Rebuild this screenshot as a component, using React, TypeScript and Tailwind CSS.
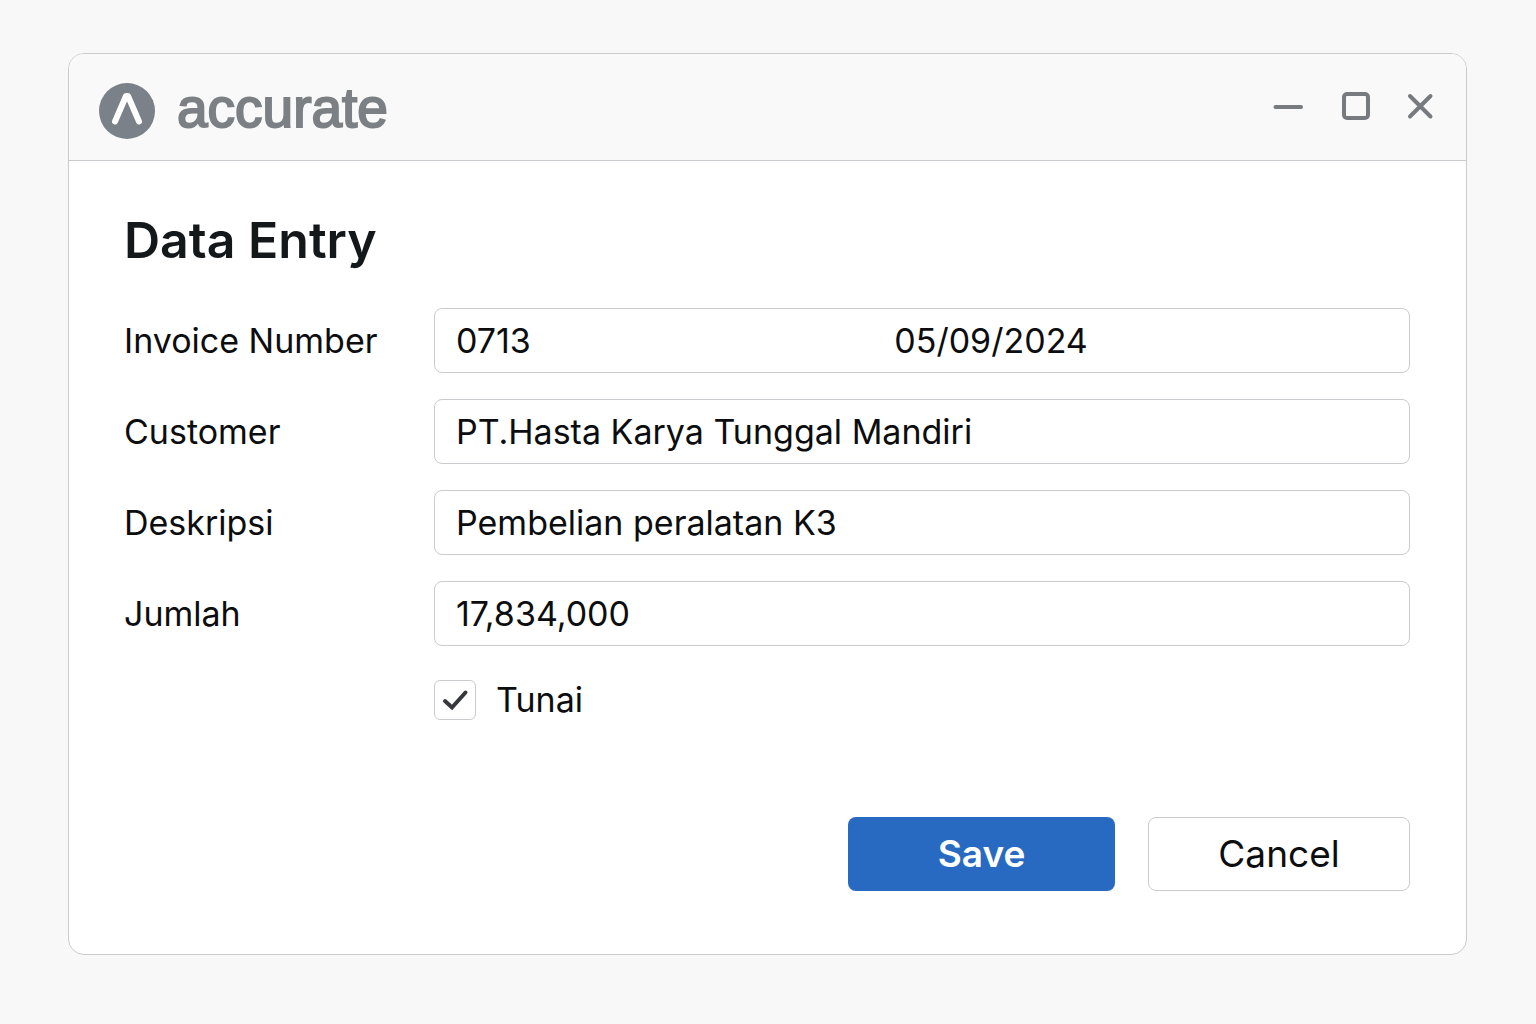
import React from 'react';

const fields = [
  { id: 'customer', label: 'Customer', value: 'PT.Hasta Karya Tunggal Mandiri' },
  { id: 'deskripsi', label: 'Deskripsi', value: 'Pembelian peralatan K3' },
  { id: 'jumlah', label: 'Jumlah', value: '17,834,000' },
];

const box = 'h-[65px] w-full min-w-0 rounded-lg border border-[#c9cbce] bg-white px-[21px] text-[34px] text-[#0c0d0f] outline-none';
const label = 'text-[34px] leading-[44px] text-[#0c0d0f]';

export default function App() {
  return (
    <div className="min-h-screen bg-[#f8f8f8] py-[53px] pr-[69px] pl-[68px] font-['Inter',sans-serif]">
      <main className="overflow-hidden rounded-2xl border border-[#c9cbce] bg-white">
        <header className="flex h-[107px] items-start justify-between border-b border-[#c9cbce] bg-[#f9f9f9] pt-[29px] pr-[30px] pl-[30px]">
          <div className="flex items-start gap-[22px]">
            <svg className="size-14" viewBox="0 0 56 56" fill="none" aria-hidden="true">
              <circle cx="28" cy="28" r="28" fill="#7b8188" />
              <path d="M16 38.500L27 13H29L40 38.500" stroke="#fff" strokeWidth="6" strokeLinecap="round" strokeLinejoin="round" />
            </svg>
            <span className="font-['Liberation_Sans',sans-serif] text-[55px] leading-[50px] text-[#7c8084] [-webkit-text-stroke:2px_#7c8084]">accurate</span>
          </div>
          <div className="flex h-12 items-center gap-[34px] text-[#777b7f]">
            <button type="button" aria-label="Minimize">
              <svg className="size-8" viewBox="0 0 32 32" fill="none" stroke="currentColor" strokeWidth="4" strokeLinecap="round"><path d="M3.500 16H29" /></svg>
            </button>
            <button type="button" aria-label="Maximize">
              <svg className="size-8" viewBox="0 0 32 32" fill="none" stroke="currentColor" strokeWidth="4"><rect x="6" y="3" width="24" height="24" rx="3" /></svg>
            </button>
            <button type="button" aria-label="Close">
              <svg className="size-8" viewBox="0 0 32 32" fill="none" stroke="currentColor" strokeWidth="4" strokeLinecap="round"><path d="M6 5L26.500 25.500M26.500 5L6 25.500" /></svg>
            </button>
          </div>
        </header>
        <form className="pt-[49px] pr-14 pb-[63px] pl-[55px]" onSubmit={(e) => e.preventDefault()}>
          <h1 className="text-[50px] leading-[60px] font-semibold text-[#15181b]">Data Entry</h1>
          <div className="mt-[38px] grid grid-cols-[310px_1fr] items-center gap-y-[26px]">
            <label htmlFor="invoice" className={label}>Invoice Number</label>
            <div className="flex h-[65px] rounded-lg border border-[#c9cbce]">
              <input id="invoice" defaultValue="0713" className="w-[45%] min-w-0 bg-transparent pl-[21px] text-[34px] text-[#0c0d0f] outline-none" />
              <input aria-label="Invoice date" defaultValue="05/09/2024" className="min-w-0 flex-1 bg-transparent pl-[21px] text-[34px] text-[#0c0d0f] outline-none" />
            </div>
            {fields.map((f) => (
              <React.Fragment key={f.id}>
                <label htmlFor={f.id} className={label}>{f.label}</label>
                <input id={f.id} defaultValue={f.value} className={box} />
              </React.Fragment>
            ))}
          </div>
          <label className="mt-8 ml-[310px] flex w-fit items-center gap-5 text-[34px] leading-[44px] text-[#0c0d0f]">
            <span className="relative h-10 w-[42px]">
              <input type="checkbox" defaultChecked className="peer block size-full appearance-none rounded-md border border-[#c9cbce] bg-white" />
              <svg className="pointer-events-none absolute inset-0 hidden size-full peer-checked:block" viewBox="0 0 42 40" fill="none" stroke="#36383b" strokeWidth="4" strokeLinecap="round"><path d="M11 21L18 27.500L31.500 12.500" /></svg>
            </span>
            Tunai
          </label>
          <div className="mt-[95px] flex justify-end gap-[33px]">
            <button type="submit" className="h-[74px] w-[267px] rounded-lg bg-[#286ac1] text-[37px] font-semibold text-white">Save</button>
            <button type="button" className="h-[74px] w-[262px] rounded-lg border border-[#c9cbce] bg-white text-[37px] text-[#0c0d0f]">Cancel</button>
          </div>
        </form>
      </main>
    </div>
  );
}
